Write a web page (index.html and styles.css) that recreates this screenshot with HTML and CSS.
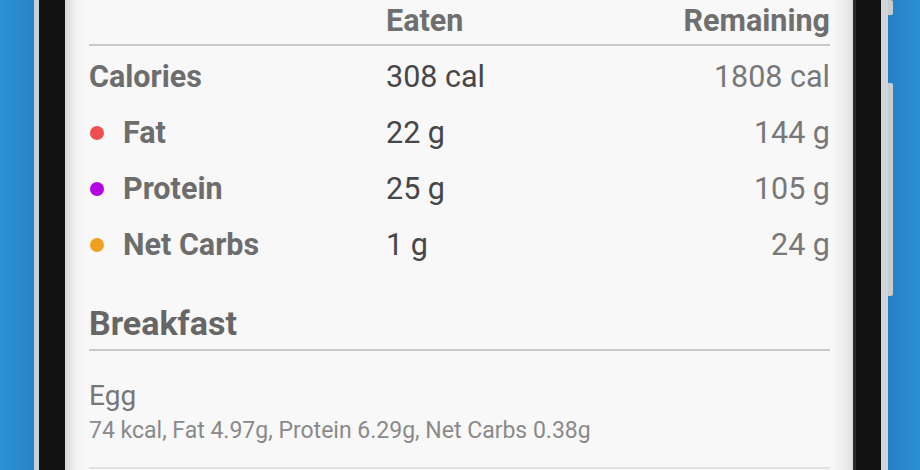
FILE: index.html
```html
<!DOCTYPE html>
<html lang="en">
<head>
    <meta charset="UTF-8">
    <meta name="viewport" content="width=device-width, initial-scale=1.0">
    <title>Daily Summary</title>
    <link rel="stylesheet" href="styles.css">
</head>
<body>
    <div class="backdrop-left"></div>
    <div class="bezel-left"></div>
    <div class="screen">
        <div class="summary">
            <div class="summary-head">
                <span></span>
                <span class="col-eaten">Eaten</span>
                <span class="col-remaining">Remaining</span>
            </div>
            <div class="summary-rows">
                <div class="row">
                    <span class="label">Calories</span>
                    <span class="eaten">308 cal</span>
                    <span class="remaining">1808 cal</span>
                </div>
                <div class="row">
                    <span class="label"><i class="dot fat"></i>Fat</span>
                    <span class="eaten">22 g</span>
                    <span class="remaining">144 g</span>
                </div>
                <div class="row">
                    <span class="label"><i class="dot protein"></i>Protein</span>
                    <span class="eaten">25 g</span>
                    <span class="remaining">105 g</span>
                </div>
                <div class="row">
                    <span class="label"><i class="dot carbs"></i>Net Carbs</span>
                    <span class="eaten">1 g</span>
                    <span class="remaining">24 g</span>
                </div>
            </div>
        </div>

        <div class="meal">
            <h2 class="meal-title">Breakfast</h2>
            <div class="food">
                <div class="food-name">Egg</div>
                <div class="food-info">74 kcal, Fat 4.97g, Protein 6.29g, Net Carbs 0.38g</div>
            </div>
        </div>
    </div>
    <div class="bezel-right"></div>
    <div class="side">
        <div class="side-button top"></div>
        <div class="side-button volume"></div>
    </div>
</body>
</html>
```

FILE: styles.css
```css
html, body {
    margin: 0;
    height: 470px;
    overflow: hidden;
}
body {
    display: flex;
    font-family: Roboto, "Liberation Sans", sans-serif;
    background: #2a8dd1;
}
.backdrop-left {
    width: 34px;
    background: linear-gradient(to right, #2c91d5, #2784c6);
}
.bezel-left {
    width: 26px;
    border-left: 5px solid #c9d1d8;
    background: #111;
}
.screen {
    width: 788px;
    padding: 0 23px 0 24px;
    box-sizing: border-box;
    background:
        linear-gradient(to right, #d9d9d9 0, #f3f3f3 12px, #f8f8f8 24px, #f8f8f8 calc(100% - 22px), #eaeaea calc(100% - 6px), #dcdcdc 100%);
}
.bezel-right {
    width: 25px;
    border-left: 3px solid #2a2a2a;
    border-right: 7px solid #d3d6d9;
    background: #111;
}
.side {
    flex: 1;
    display: flex;
    flex-direction: column;
    background: linear-gradient(to right, #2680c4, #2b8fd3);
}
.side-button {
    width: 5px;
    background: #c9ccce;
    border-radius: 0 2px 2px 0;
}
.side-button.top {
    height: 15px;
}
.side-button.volume {
    margin-top: 68px;
    height: 213px;
}

/* summary table */
.summary-head, .row {
    display: grid;
    grid-template-columns: 297px 1fr auto;
    align-items: center;
}
.summary-head {
    padding: 3px 0 5px;
    border-bottom: 2px solid #c9c9c9;
    font-size: 30.5px;
    line-height: 36px;
    font-weight: bold;
    color: #6f6f6f;
}
.col-remaining {
    text-align: right;
}
.summary-rows {
    padding-top: 3px;
}
.row {
    height: 56px;
    font-size: 30.5px;
    line-height: 56px;
}
.label {
    display: flex;
    align-items: center;
    font-weight: bold;
    color: #6d6d6d;
}
.eaten {
    color: #474747;
}
.remaining {
    text-align: right;
    color: #787878;
}
.dot {
    width: 14px;
    height: 14px;
    border-radius: 50%;
    margin: 0 19px 0 1px;
}
.dot.fat { background: #ef4f50; }
.dot.protein { background: #b302e3; }
.dot.carbs { background: #f0a11f; }

/* meal section */
.meal {
    margin-top: 32px;
}
.meal-title {
    margin: 0;
    padding-bottom: 8px;
    border-bottom: 2px solid #c9c9c9;
    font-size: 34px;
    line-height: 36px;
    color: #666;
}
.food {
    padding: 30px 0 23px;
    border-bottom: 2px solid #e2e2e2;
}
.food-name {
    font-size: 28px;
    line-height: 30px;
    color: #777;
}
.food-info {
    margin-top: 7px;
    font-size: 23px;
    line-height: 26px;
    color: #8a8a8a;
}
```
